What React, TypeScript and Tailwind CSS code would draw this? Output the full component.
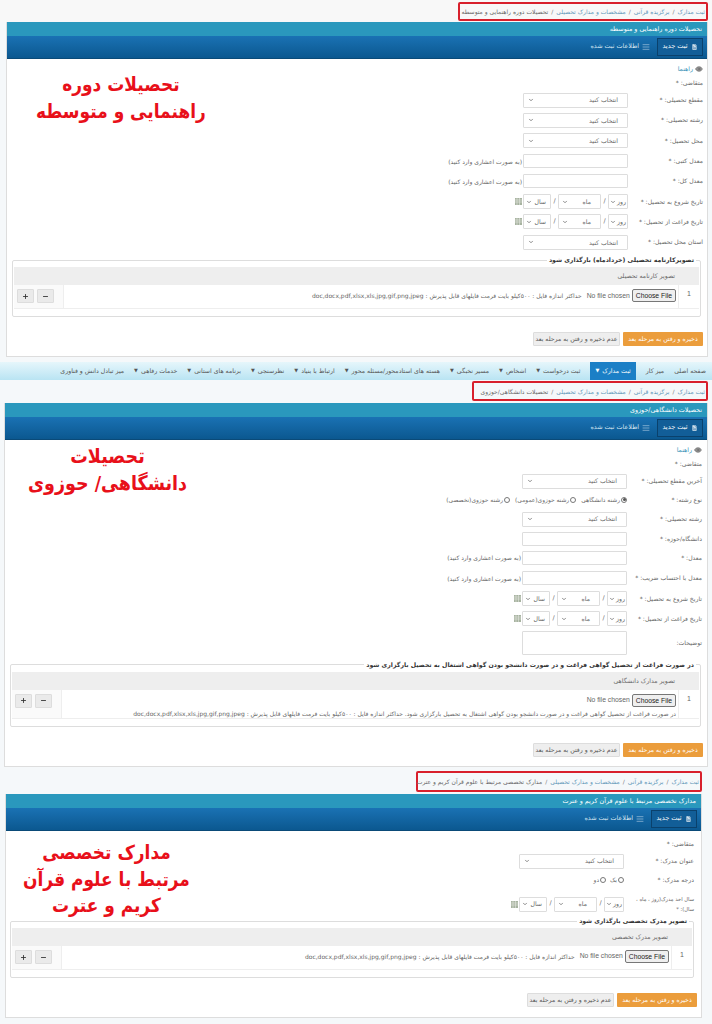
import { AlignJustify, ChevronDown, Eye, FileText, Minus, Plus } from "lucide-react";
import type { ReactNode } from "react";

const navItems = [
  { label: "صفحه اصلی" },
  { label: "میز کار" },
  { label: "ثبت مدارک", menu: true, active: true },
  { label: "ثبت درخواست", menu: true },
  { label: "اشخاص", menu: true },
  { label: "مسیر نخبگی", menu: true },
  { label: "هسته های استادمحور/مسئله محور", menu: true },
  { label: "ارتباط با بنیاد", menu: true },
  { label: "نظرسنجی", menu: true },
  { label: "برنامه های استانی", menu: true },
  { label: "خدمات رفاهی", menu: true },
  { label: "میز تبادل دانش و فناوری" },
];

const ACCEPTED = "doc,docx,pdf,xlsx,xls,jpg,gif,png,jpeg";
const HINT = "(به صورت اعشاری وارد کنید)";

function Breadcrumb({ current, box }: { current: string; box: string }) {
  return (
    <div className={`flex items-center gap-[3px] border-2 border-[#d8202c] rounded-[2px] px-[1px] text-[6px] text-[#5f97b8] whitespace-nowrap ${box}`}>
      <span>ثبت مدارک</span>
      <span className="text-[#777]">/</span>
      <span>برگزیده قرآنی</span>
      <span className="text-[#777]">/</span>
      <span>مشخصات و مدارک تحصیلی</span>
      <span className="text-[#777]">/</span>
      <span className="text-[#666]">{current}</span>
    </div>
  );
}

function PanelHead({ title }: { title: string }) {
  return (
    <>
      <div className="h-[14px] bg-[#2a98bd] text-white text-[6.4px] leading-[14px] px-[5px]">{title}</div>
      <div className="h-[23px] bg-gradient-to-b from-[#1a72b4] to-[#0b5890] flex items-center pr-[4px] border-b border-[#0a4a78]">
        <div className="flex items-center justify-center gap-[3px] w-[46px] h-[18px] bg-[#125e98] border border-[#0a416c] text-white text-[6.6px]">
          <FileText className="w-[7px] h-[8px]" fill="white" stroke="#125e98" />
          ثبت جدید
        </div>
        <div className="flex items-center gap-[3px] mr-[7px] text-[#d7e6f2] text-[6.4px]">
          <AlignJustify className="w-[8px] h-[8px]" strokeWidth={1.5} />
          اطلاعات ثبت شده
        </div>
      </div>
    </>
  );
}

function Row({ label, lw, h = "h-[20.3px]", children }: { label: ReactNode; lw: string; h?: string; children?: ReactNode }) {
  return (
    <div className={`flex items-center ${h}`}>
      <div className={`shrink-0 whitespace-nowrap text-[6.1px] leading-[10px] text-[#666] ${lw}`}>{label}</div>
      {children}
    </div>
  );
}

function Select({ text = "انتخاب کنید", w = "w-[105px]", pad = "pr-[9px] pl-[4px]" }: { text?: string; w?: string; pad?: string }) {
  return (
    <div className={`flex items-center justify-between h-[15px] bg-white border border-[#ddd] rounded-[1px] text-[6.2px] text-[#666] ${pad} ${w}`}>
      <span>{text}</span>
      <ChevronDown className="w-[6px] h-[6px] shrink-0" strokeWidth={3} />
    </div>
  );
}

function TextBox({ hint }: { hint?: boolean }) {
  return (
    <>
      <div className="w-[105px] h-[14px] bg-white border border-[#ddd] rounded-[1px]" />
      {hint && <span className="mr-[1px] text-[6px] text-[#666] whitespace-nowrap">{HINT}</span>}
    </>
  );
}

function CalendarIcon() {
  return (
    <svg viewBox="0 0 7 7" className="w-[7px] h-[7px] mr-[1px]">
      <rect width="7" height="7" fill="#a7b3a0" />
      <path d="M0 2h7M0 4h7M2 0v7M4.5 0v7" stroke="#e4e8e0" strokeWidth="0.6" />
    </svg>
  );
}

function DateBox() {
  return (
    <div className="flex items-center text-[6.4px] text-[#666]">
      <Select text="روز" w="w-[20px]" pad="pr-[1px] pl-[1px]" />
      <span className="w-[7px] text-center">/</span>
      <Select text="ماه" w="w-[43px]" pad="pr-[9px] pl-[3px]" />
      <span className="w-[7px] text-center">/</span>
      <Select text="سال" w="w-[28px]" pad="pr-[4px] pl-[2px]" />
      <CalendarIcon />
    </div>
  );
}

function Radio({ label, checked }: { label: string; checked?: boolean }) {
  return (
    <span className="flex items-center gap-[1px] text-[5.9px] text-[#666] whitespace-nowrap">
      <span className="flex items-center justify-center w-[6px] h-[6px] rounded-full border border-[#777]">
        {checked && <span className="w-[3px] h-[3px] rounded-full bg-[#555]" />}
      </span>
      {label}
    </span>
  );
}

function FileChooser() {
  return (
    <span className="inline-flex items-center gap-[2px] shrink-0" dir="ltr">
      <span className="font-['Liberation_Sans',sans-serif] text-[6.8px] text-[#666]">No file chosen</span>
      <span className="font-['Liberation_Sans',sans-serif] text-[6.8px] leading-[9px] text-[#222] bg-[#efefef] border border-[#777] rounded-[2px] px-[3px] py-[1px]">Choose File</span>
    </span>
  );
}

function UploadBox({
  legend,
  legendSize,
  column,
  rowClass,
  box,
  stacked,
}: {
  legend: string;
  legendSize: string;
  column: string;
  rowClass: string;
  box: string;
  stacked?: string;
}) {
  return (
    <fieldset className={`border border-[#ddd] rounded-[2px] px-[1px] pb-[7px] ${box}`}>
      <legend className={`mr-[3px] px-[2px] leading-[12px] font-bold text-[#333] whitespace-nowrap ${legendSize}`}>{legend}</legend>
      <div className="h-[18px] mt-[1px] bg-[#eeeeee] pr-[24px] text-[6.2px] leading-[18px] text-[#666]">{column}</div>
      <div className={`flex border-b border-[#eee] ${rowClass}`}>
        <div className="w-[21px] shrink-0 border-l border-[#eee] pt-[4px] text-center font-['Liberation_Sans',sans-serif] text-[7px] text-[#666]">1</div>
        <div className="flex-1 pt-[4px] px-[2px] text-[6px] text-[#666] min-w-0">
          {stacked ? (
            <>
              <FileChooser />
              <div className="mt-[2px] whitespace-nowrap">
                {stacked} حداکثر اندازه فایل : ۵۰۰کیلو بایت فرمت فایلهای قابل پذیرش : {ACCEPTED}
              </div>
            </>
          ) : (
            <div className="flex items-center gap-[5px] whitespace-nowrap">
              <FileChooser />
              <span>حداکثر اندازه فایل : ۵۰۰کیلو بایت فرمت فایلهای قابل پذیرش : {ACCEPTED}</span>
            </div>
          )}
        </div>
        <div className="w-[50px] shrink-0 bg-[#fafafa] border-r border-[#eee] flex items-start justify-end gap-[3px] pt-[4px] pl-[3px]">
          <span className="flex items-center justify-center w-[17px] h-[14px] bg-[#eaeaea] border border-[#ddd] rounded-[1px]">
            <Minus className="w-[7px] h-[7px] text-[#333]" strokeWidth={3} />
          </span>
          <span className="flex items-center justify-center w-[17px] h-[14px] bg-[#eaeaea] border border-[#ddd] rounded-[1px]">
            <Plus className="w-[7px] h-[7px] text-[#333]" strokeWidth={3} />
          </span>
        </div>
      </div>
    </fieldset>
  );
}

function Actions({ box }: { box: string }) {
  return (
    <div className={`flex gap-[3px] ${box}`}>
      <div className="w-[80px] h-[14px] bg-[#eb9d3c] text-white text-[6.2px] leading-[14px] text-center rounded-[1px]">ذخیره و رفتن به مرحله بعد</div>
      <div className="w-[87px] h-[14px] bg-[#eeeeee] border border-[#ddd] text-[#555] text-[6.2px] leading-[12px] text-center rounded-[1px]">عدم ذخیره و رفتن به مرحله بعد</div>
    </div>
  );
}

// red captions laid over the empty left side of each form
function Note({ lines, pos }: { lines: string[]; pos: string }) {
  return (
    <div className={`absolute text-center font-bold text-[#e8101a] leading-[23px] scale-y-[1.15] whitespace-nowrap ${pos}`}>
      {lines.map((line) => (
        <div key={line}>{line}</div>
      ))}
    </div>
  );
}

function Guide() {
  return (
    <div className="flex items-center gap-[2px] h-[14px] text-[6.2px] text-[#3a93b8]">
      <Eye className="w-[8px] h-[8px] text-[#666]" fill="#999" />
      راهنما
    </div>
  );
}

export default function App() {
  const lw1 = "w-[75px]";
  const lw3 = "w-[70px]";

  return (
    <div dir="rtl" className="w-[712px] h-[1024px] overflow-hidden bg-[#f5f8fa] font-['DejaVu_Sans',sans-serif]">
      {/* First form */}
      <div className="h-[22px] pt-[2px] pr-[4px] bg-[#f8f8f8]">
        <Breadcrumb current="تحصیلات دوره راهنمایی و متوسطه" box="w-[250px] h-[19px]" />
      </div>
      <section className="relative mr-[4px] w-[702px] h-[335px] bg-white border-x border-b border-[#ddd]">
        <PanelHead title="تحصیلات دوره راهنمایی و متوسطه" />
        <Note lines={["تحصیلات دوره", "راهنمایی و متوسطه"]} pos="left-[29px] top-[53px] text-[17px]" />
        <div className="pt-[3px] pr-[4px]">
          <Guide />
          <Row label="متقاضی: *" lw={lw1} h="h-[14px]" />
          <Row label="مقطع تحصیلی: *" lw={lw1}><Select /></Row>
          <Row label="رشته تحصیلی: *" lw={lw1}><Select /></Row>
          <Row label="محل تحصیل: *" lw={lw1}><Select /></Row>
          <Row label="معدل کتبی: *" lw={lw1}><TextBox hint /></Row>
          <Row label="معدل کل: *" lw={lw1}><TextBox hint /></Row>
          <Row label="تاریخ شروع به تحصیل: *" lw={lw1}><DateBox /></Row>
          <Row label="تاریخ فراغت از تحصیل: *" lw={lw1}><DateBox /></Row>
          <Row label="استان محل تحصیل: *" lw={lw1}><Select /></Row>
        </div>
        <div className="pr-[6px] mt-[2px]">
          <UploadBox legend="تصویرکارنامه تحصیلی (خردادماه) بارگذاری شود" legendSize="text-[6.2px]" column="تصویر کارنامه تحصیلی" rowClass="h-[24px]" box="w-[689px]" />
        </div>
        <Actions box="mt-[15px] mr-[4px]" />
      </section>

      {/* Main menu */}
      <nav className="mt-[5px] h-[18px] bg-gradient-to-b from-[#e6f6fb] to-[#b9e4f3] flex items-center pr-[1px] text-[6.2px] text-[#555] whitespace-nowrap">
        {navItems.map((item) => (
          <span
            key={item.label}
            className={item.active ? "flex items-center h-[18px] mx-[5px] px-[5px] bg-[#1b7fc6] text-white" : "flex items-center mx-[5px]"}
          >
            {item.label}
            {item.menu && <span className="mr-[3px] text-[5px]">▼</span>}
          </span>
        ))}
      </nav>

      {/* Second form */}
      <div className="h-[23px] pt-[1px] pr-[4px]">
        <Breadcrumb current="تحصیلات دانشگاهی/حوزوی" box="w-[236px] h-[20px]" />
      </div>
      <section className="relative mr-[4px] w-[704px] h-[364px] bg-white border-x border-b border-[#ddd]">
        <PanelHead title="تحصیلات دانشگاهی/حوزوی" />
        <Note lines={["تحصیلات", "دانشگاهی/ حوزوی"]} pos="left-[23px] top-[44px] text-[17.5px]" />
        <div className="pt-[3px] pr-[5px]">
          <Guide />
          <Row label="متقاضی: *" lw={lw1} h="h-[14px]" />
          <Row label="آخرین مقطع تحصیلی: *" lw={lw1} h="h-[20px]"><Select /></Row>
          <Row label="نوع رشته: *" lw={lw1} h="h-[18px]">
            <div className="flex items-center gap-[5px]">
              <Radio label="رشته دانشگاهی" checked />
              <Radio label="رشته حوزوی(عمومی)" />
              <Radio label="رشته حوزوی(تخصصی)" />
            </div>
          </Row>
          <Row label="رشته تحصیلی: *" lw={lw1}><Select /></Row>
          <Row label="دانشگاه/حوزه: *" lw={lw1} h="h-[18.5px]"><TextBox /></Row>
          <Row label="معدل: *" lw={lw1}><TextBox hint /></Row>
          <Row label="معدل با احتساب ضریب: *" lw={lw1}><TextBox hint /></Row>
          <Row label="تاریخ شروع به تحصیل: *" lw={lw1}><DateBox /></Row>
          <Row label="تاریخ فراغت از تحصیل: *" lw={lw1}><DateBox /></Row>
          <Row label="توضیحات:" lw={lw1} h="h-[28px]">
            <div className="w-[105px] h-[24px] bg-white border border-[#ddd] rounded-[1px]" />
          </Row>
        </div>
        <div className="pr-[6px] mt-[2px]">
          <UploadBox
            legend="در صورت فراغت از تحصیل گواهی فراغت و در صورت دانشجو بودن گواهی اشتغال به تحصیل بارگزاری شود"
            legendSize="text-[6.2px]"
            column="تصویر مدارک دانشگاهی"
            rowClass="h-[29px]"
            box="w-[691px]"
            stacked="در صورت فراغت از تحصیل گواهی فراغت و در صورت دانشجو بودن گواهی اشتغال به تحصیل بارگزاری شود."
          />
        </div>
        <Actions box="mt-[16px] mr-[4px]" />
      </section>

      {/* Third form */}
      <div className="h-[24px] mt-[3px] pt-[1px] pr-[10px]">
        <Breadcrumb current="مدارک تخصصی مرتبط با علوم قرآن کریم و عترت" box="w-[286px] h-[21px]" />
      </div>
      <section className="relative mr-[10px] w-[697px] h-[224px] bg-white border-x border-b border-[#ddd]">
        <PanelHead title="مدارک تخصصی مرتبط با علوم قرآن کریم و عترت" />
        <Note lines={["مدارک تخصصی", "مرتبط با علوم قرآن", "کریم و عترت"]} pos="left-[17px] top-[51px] text-[17px]" />
        <div className="pt-[6px] pr-[7px]">
          <Row label="متقاضی: *" lw={lw3} h="h-[14px]" />
          <Row label="عنوان مدرک: *" lw={lw3} h="h-[20px]"><Select /></Row>
          <Row label="درجه مدرک: *" lw={lw3} h="h-[18px]">
            <div className="flex items-center gap-[4px]">
              <Radio label="یک" />
              <Radio label="دو" />
            </div>
          </Row>
          <Row
            label={
              <span className="text-[5.2px]">
                سال اخذ مدرک(روز ، ماه ،
                <br />
                سال): *
              </span>
            }
            lw={lw3}
            h="h-[30px]"
          >
            <DateBox />
          </Row>
        </div>
        <div className="pr-[7px] mt-[-4px]">
          <UploadBox legend="تصویر مدرک تخصصی بارگذاری شود" legendSize="text-[6.1px]" column="تصویر مدرک تخصصی" rowClass="h-[24px]" box="w-[684px]" />
        </div>
        <Actions box="mt-[15px] mr-[4px]" />
      </section>
    </div>
  );
}
